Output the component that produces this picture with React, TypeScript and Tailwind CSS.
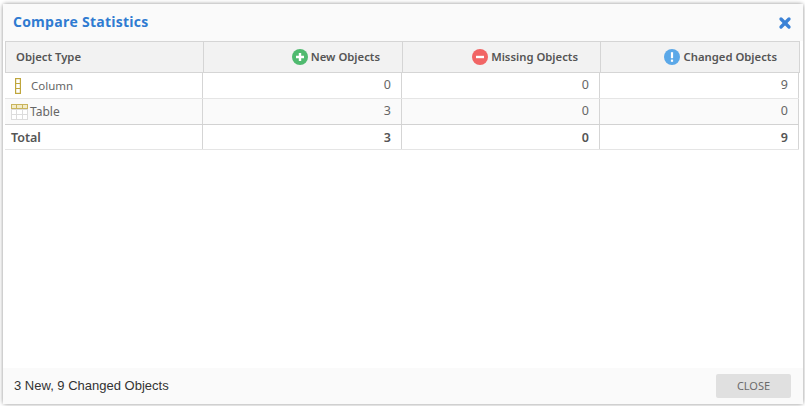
import { X } from 'lucide-react';

const rows = [
  { name: 'Column', type: 'column', values: [0, 0, 9] },
  { name: 'Table', type: 'table', values: [3, 0, 0] },
];

function ColumnIcon() {
  return (
    <svg width="6" height="16" viewBox="0 0 6 16" className="shrink-0">
      <rect x="0.6" y="0.6" width="4.8" height="14.8" fill="#fff" stroke="#bfa63c" strokeWidth="1.2" />
      <path d="M0 5.5h6M0 10.5h6" stroke="#bfa63c" strokeWidth="1.2" />
    </svg>
  );
}

function TableIcon() {
  return (
    <svg width="17" height="16" viewBox="0 0 17 16" className="shrink-0">
      <rect x="0.5" y="0.5" width="16" height="15" fill="#fff" stroke="#dcdcdc" />
      <path d="M0.5 5.5h16M0.5 10.5h16M5.5 5v11M11.5 5v11" stroke="#dcdcdc" />
      <rect x="0.5" y="0.5" width="16" height="4" fill="#f3ecc8" stroke="#c9b45c" />
      <path d="M5.5 0v5M11.5 0v5" stroke="#c9b45c" />
    </svg>
  );
}

function StatusIcon({ kind }: { kind: 'new' | 'missing' | 'changed' }) {
  const fill = kind === 'new' ? '#4fba6f' : kind === 'missing' ? '#f16565' : '#5ba8e8';
  return (
    <svg width="16" height="16" viewBox="0 0 16 16" className="shrink-0">
      <circle cx="8" cy="8" r="8" fill={fill} />
      {kind === 'new' && <path d="M8 4v8M4 8h8" stroke="#fff" strokeWidth="2.4" />}
      {kind === 'missing' && <path d="M4 8h8" stroke="#fff" strokeWidth="2.4" />}
      {kind === 'changed' && (
        <>
          <path d="M8 3.2v6" stroke="#fff" strokeWidth="2.2" />
          <rect x="6.9" y="10.6" width="2.2" height="2.2" fill="#fff" />
        </>
      )}
    </svg>
  );
}

function HeaderCell({ kind, label }: { kind: 'new' | 'missing' | 'changed'; label: string }) {
  return (
    <div className="flex items-center justify-end gap-[3px] border-r border-[#d5d5d5] pr-[22px]">
      <StatusIcon kind={kind} />
      <span>{label}</span>
    </div>
  );
}

export default function App() {
  return (
    <div className="h-[406px] w-[805px] overflow-hidden bg-white pt-[4px] pl-[3px] font-['Noto_Sans',sans-serif]">
      <div className="flex h-[400px] w-[800px] flex-col rounded-[3px] bg-white shadow-[0_0_4px_rgba(0,0,0,0.45)]">
        <div className="flex h-[37px] shrink-0 items-center justify-between bg-[#fafafa] pr-[11px] pl-[10px]">
          <h1 className="-mt-[2px] font-['Open_Sans',sans-serif] text-[14px] font-bold tracking-[0.25px] text-[#2f7bd1]">
            Compare Statistics
          </h1>
          <X size={16} strokeWidth={5} className="-mr-[1px] text-[#3b82d6]" />
        </div>

        <div className="ml-[2px]">
          <div className="grid h-[32px] w-[795px] grid-cols-[198px_199px_198px_199px] border-y border-l border-[#d5d5d5] bg-[#f2f2f2] text-[11.3px] font-semibold text-[#555555]">
            <div className="flex items-center border-r border-[#d5d5d5] pl-[10px]">Object Type</div>
            <HeaderCell kind="new" label="New Objects" />
            <HeaderCell kind="missing" label="Missing Objects" />
            <HeaderCell kind="changed" label="Changed Objects" />
          </div>

          {rows.map((row, i) => (
            <div
              key={row.name}
              className={`grid h-[26px] w-[794px] grid-cols-[198px_199px_198px_199px] border-b text-[#666666] ${
                i === 1 ? 'border-[#d2d2d2] bg-[#fafafa]' : 'border-[#e5e5e5] bg-white'
              }`}
            >
              <div className="flex items-center border-r border-[#d5d5d5] text-[11.5px]">
                {row.type === 'column' ? (
                  <div className="flex items-center gap-[10px] pl-[10px]">
                    <ColumnIcon />
                    <span>{row.name}</span>
                  </div>
                ) : (
                  <div className="flex items-center gap-[2px] pl-[6px]">
                    <TableIcon />
                    <span className="text-[12px]">{row.name}</span>
                  </div>
                )}
              </div>
              {row.values.map((v, j) => (
                <div key={j} className="flex items-center justify-end border-r border-[#d5d5d5] pr-[10px] text-[12.5px]">
                  {v}
                </div>
              ))}
            </div>
          ))}

          <div className="grid h-[25px] w-[794px] grid-cols-[198px_199px_198px_199px] border-b border-[#e5e5e5] text-[12.5px] font-semibold text-[#555555]">
            <div className="flex items-center border-r border-[#d5d5d5] pt-[2px] pl-[6px]">Total</div>
            {[3, 0, 9].map((v, j) => (
              <div key={j} className="flex items-center justify-end border-r border-[#d5d5d5] pt-[2px] pr-[10px]">
                {v}
              </div>
            ))}
          </div>
        </div>

        <div className="flex-1" />

        <div className="flex h-[36px] shrink-0 items-center justify-between bg-[#fafafa] pr-[12px] pl-[11px]">
          <span className="font-['Liberation_Sans',sans-serif] text-[13px] text-[#333333]">3 New, 9 Changed Objects</span>
          <button className="flex h-[24px] w-[75px] items-center justify-center rounded-[2px] bg-[#e0e0e0] text-[11px] text-[#6b6b6b]">
            CLOSE
          </button>
        </div>
      </div>
    </div>
  );
}
